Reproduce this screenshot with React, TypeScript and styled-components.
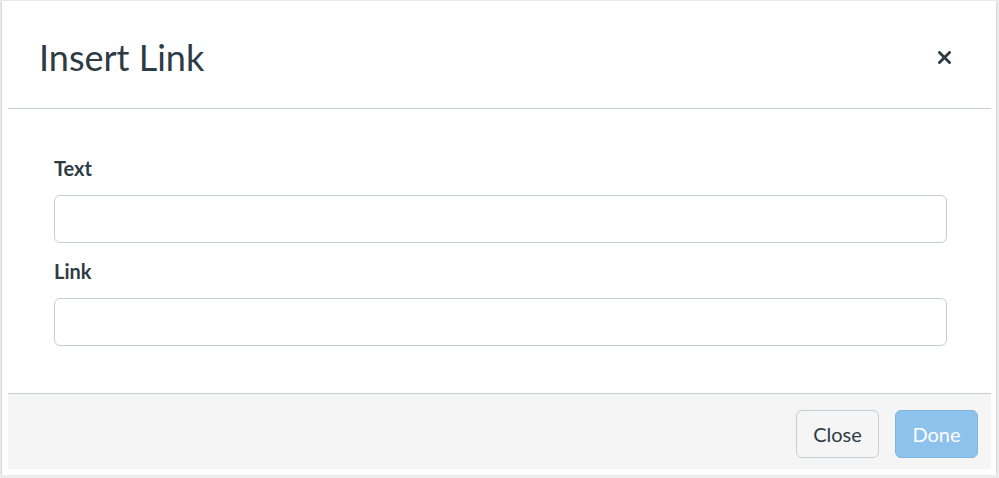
import React from 'react';
import styled, { createGlobalStyle } from 'styled-components';

const GlobalStyle = createGlobalStyle`
  html, body {
    margin: 0;
    padding: 0;
    background: #ececec;
    font-family: Lato, 'Open Sans', 'Liberation Sans', sans-serif;
    color: #2d3b45;
  }
  * { box-sizing: border-box; }
`;

// white outer frame that holds the dialog
const Frame = styled.div`
  margin: 1px 3px 0 2px;
  height: 474px;
  background: #fff;
  padding: 6px 5px 6px 6px;
  box-shadow: 0 1px 2px rgba(0, 0, 0, 0.25);
`;

const Dialog = styled.div`
  display: flex;
  flex-direction: column;
  height: 100%;
`;

const Header = styled.header`
  display: flex;
  align-items: center;
  justify-content: space-between;
  height: 102px;
  padding: 0 39px 0 31px;
  border-bottom: 1px solid #c7cdd1;
`;

const Title = styled.h2`
  margin: 0 0 2px;
  font-size: 36px;
  font-weight: 400;
  line-height: 1;
  color: #2d3b45;
`;

const CloseIcon = styled.button`
  display: flex;
  align-items: center;
  justify-content: center;
  width: 16px;
  height: 16px;
  padding: 0;
  border: 0;
  background: none;
  color: #2d3b45;
  cursor: pointer;
`;

const Body = styled.div`
  flex: 1;
  display: flex;
  flex-direction: column;
  gap: 16px;
  padding: 47px 44px 0 46px;
`;

const Field = styled.div`
  display: flex;
  flex-direction: column;
  gap: 15px;
`;

const Label = styled.label`
  font-size: 20px;
  line-height: 24px;
  font-weight: 700;
  color: #2d3b45;
`;

const Input = styled.input`
  height: 48px;
  width: 100%;
  border: 1px solid #c7cdd1;
  border-radius: 6px;
  background: #fff;
  font: inherit;
  font-size: 20px;
  padding: 0 12px;
  outline: none;
`;

const Footer = styled.footer`
  display: flex;
  justify-content: flex-end;
  gap: 16px;
  height: 76px;
  padding: 16px 13px 0 0;
  background: #f5f5f5;
  border-top: 1px solid #c7cdd1;
`;

const Button = styled.button<{ $primary?: boolean }>`
  height: 48px;
  width: 83px;
  border-radius: 6px;
  font-family: inherit;
  font-size: 20px;
  font-weight: 400;
  border: 1px solid ${(p) => (p.$primary ? '#7fb5df' : '#c7cdd1')};
  background: ${(p) => (p.$primary ? '#8cc2eb' : '#f5f5f5')};
  color: ${(p) => (p.$primary ? '#fff' : '#2d3b45')};
  cursor: pointer;
`;

export default function App() {
  return (
    <>
      <GlobalStyle />
      <Frame>
        <Dialog>
          <Header>
            <Title>Insert Link</Title>
            <CloseIcon aria-label="Close">
              <svg width="13" height="13" viewBox="0 0 13 13">
                <path d="M1.5 1.5 L11.5 11.5 M11.5 1.5 L1.5 11.5" stroke="currentColor" strokeWidth="2.8" strokeLinecap="square" />
              </svg>
            </CloseIcon>
          </Header>
          <Body>
            <Field>
              <Label>Text</Label>
              <Input />
            </Field>
            <Field>
              <Label>Link</Label>
              <Input />
            </Field>
          </Body>
          <Footer>
            <Button>Close</Button>
            <Button $primary>Done</Button>
          </Footer>
        </Dialog>
      </Frame>
    </>
  );
}
